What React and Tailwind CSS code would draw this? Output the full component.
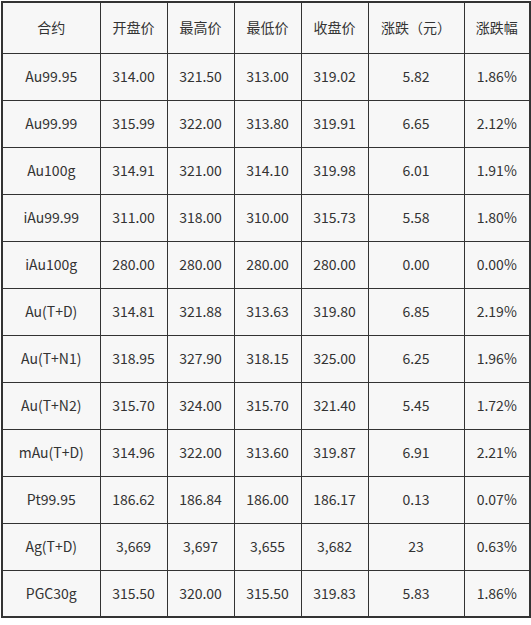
import React from "react";

const headers = ["合约", "开盘价", "最高价", "最低价", "收盘价", "涨跌（元）", "涨跌幅"];

const rows = [
  ["Au99.95", "314.00", "321.50", "313.00", "319.02", "5.82", "1.86%"],
  ["Au99.99", "315.99", "322.00", "313.80", "319.91", "6.65", "2.12%"],
  ["Au100g", "314.91", "321.00", "314.10", "319.98", "6.01", "1.91%"],
  ["iAu99.99", "311.00", "318.00", "310.00", "315.73", "5.58", "1.80%"],
  ["iAu100g", "280.00", "280.00", "280.00", "280.00", "0.00", "0.00%"],
  ["Au(T+D)", "314.81", "321.88", "313.63", "319.80", "6.85", "2.19%"],
  ["Au(T+N1)", "318.95", "327.90", "318.15", "325.00", "6.25", "1.96%"],
  ["Au(T+N2)", "315.70", "324.00", "315.70", "321.40", "5.45", "1.72%"],
  ["mAu(T+D)", "314.96", "322.00", "313.60", "319.87", "6.91", "2.21%"],
  ["Pt99.95", "186.62", "186.84", "186.00", "186.17", "0.13", "0.07%"],
  ["Ag(T+D)", "3,669", "3,697", "3,655", "3,682", "23", "0.63%"],
  ["PGC30g", "315.50", "320.00", "315.50", "319.83", "5.83", "1.86%"],
];

const widths = ["w-[98px]", "w-[67px]", "w-[67px]", "w-[67px]", "w-[67px]", "w-[96px]", "w-[66px]"];

export default function App() {
  return (
    <div className="w-[531px] h-[625px] bg-white pt-[1px] pl-[1px]">
      <table
        className="table-fixed border-collapse border-2 border-[#333] bg-[#f7f7f7] text-[#333] text-[14px] w-[528px]"
        style={{ fontFamily: '"Noto Sans CJK SC", "Noto Sans", sans-serif' }}
      >
        <colgroup>
          {widths.map((w, i) => (
            <col key={i} className={w} />
          ))}
        </colgroup>
        <thead>
          <tr className="h-[51px]">
            {headers.map((h) => (
              <th key={h} className="border border-[#333] font-normal text-center p-0">
                {h}
              </th>
            ))}
          </tr>
        </thead>
        <tbody>
          {rows.map((r) => (
            <tr key={r[0]} className="h-[47px]">
              {r.map((c, i) => (
                <td key={i} className="border border-[#333] text-center p-0">
                  {c}
                </td>
              ))}
            </tr>
          ))}
        </tbody>
      </table>
    </div>
  );
}
